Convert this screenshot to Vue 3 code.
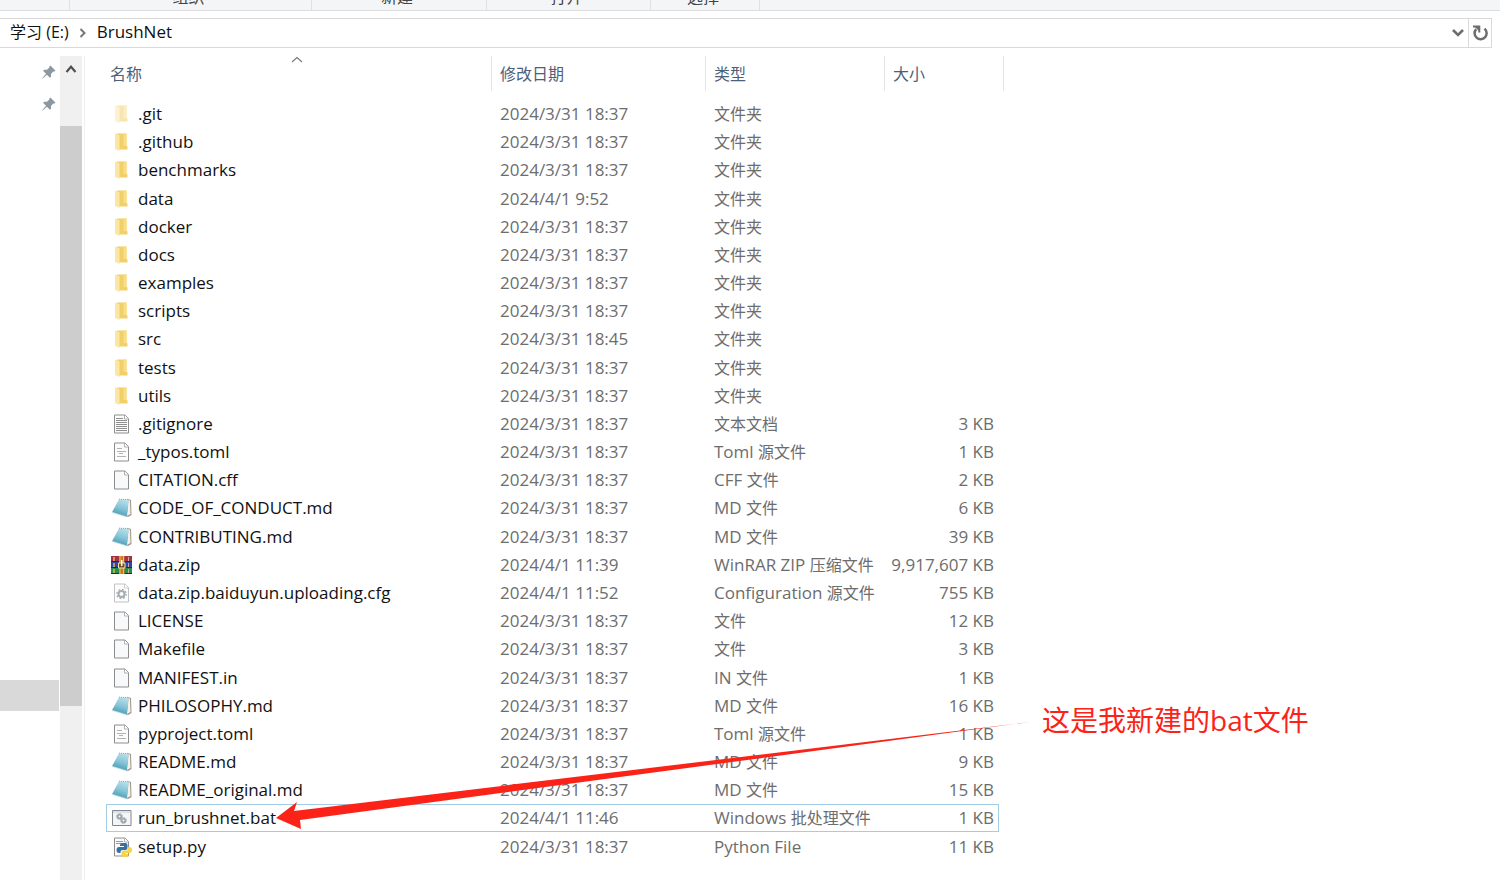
<script setup>
const day = '2024/3/31 18:37'
const files = [
  ['hidden', '.git', day, '文件夹', ''],
  ['folder', '.github', day, '文件夹', ''],
  ['folder', 'benchmarks', day, '文件夹', ''],
  ['folder', 'data', '2024/4/1 9:52', '文件夹', ''],
  ['folder', 'docker', day, '文件夹', ''],
  ['folder', 'docs', day, '文件夹', ''],
  ['folder', 'examples', day, '文件夹', ''],
  ['folder', 'scripts', day, '文件夹', ''],
  ['folder', 'src', '2024/3/31 18:45', '文件夹', ''],
  ['folder', 'tests', day, '文件夹', ''],
  ['folder', 'utils', day, '文件夹', ''],
  ['text', '.gitignore', day, '文本文档', '3 KB'],
  ['toml', '_typos.toml', day, 'Toml 源文件', '1 KB'],
  ['blank', 'CITATION.cff', day, 'CFF 文件', '2 KB'],
  ['md', 'CODE_OF_CONDUCT.md', day, 'MD 文件', '6 KB'],
  ['md', 'CONTRIBUTING.md', day, 'MD 文件', '39 KB'],
  ['rar', 'data.zip', '2024/4/1 11:39', 'WinRAR ZIP 压缩文件', '9,917,607 KB'],
  ['cfg', 'data.zip.baiduyun.uploading.cfg', '2024/4/1 11:52', 'Configuration 源文件', '755 KB'],
  ['blank', 'LICENSE', day, '文件', '12 KB'],
  ['blank', 'Makefile', day, '文件', '3 KB'],
  ['blank', 'MANIFEST.in', day, 'IN 文件', '1 KB'],
  ['md', 'PHILOSOPHY.md', day, 'MD 文件', '16 KB'],
  ['toml', 'pyproject.toml', day, 'Toml 源文件', '1 KB'],
  ['md', 'README.md', day, 'MD 文件', '9 KB'],
  ['md', 'README_original.md', day, 'MD 文件', '15 KB'],
  ['bat', 'run_brushnet.bat', '2024/4/1 11:46', 'Windows 批处理文件', '1 KB'],
  ['py', 'setup.py', day, 'Python File', '11 KB'],
].map(([icon, name, date, type, size]) => {
  const [, latin, han] = type.match(/^([\x00-\x7f]*)(.*)$/)
  return { icon, name, date, latin, han, size }
})
const isPage = (icon) => ['text', 'toml', 'blank', 'cfg', 'py'].includes(icon)
</script>

<template>
  <div class="explorer">
    <svg class="defs" width="0" height="0" aria-hidden="true">
      <linearGradient id="sheet" x1="0.7" y1="0" x2="0.4" y2="1">
        <stop offset="0" stop-color="#b9e0ea" />
        <stop offset="0.5" stop-color="#86c5d7" />
        <stop offset="1" stop-color="#4496b0" />
      </linearGradient>
    </svg>
    <div class="ribbon">
      <span class="group g1">组织</span>
      <span class="group g2">新建</span>
      <span class="group g3">打开</span>
      <span class="group g4">选择</span>
    </div>

    <nav class="address" aria-label="地址">
      <button class="crumb han">学习 (E:)</button>
      <svg class="sep" width="8" height="10" viewBox="0 0 8 10"><path d="M1.5 1l4 4-4 4" fill="none" stroke="#777" stroke-width="2" /></svg>
      <button class="crumb">BrushNet</button>
      <button class="drop" aria-label="历史记录">
        <svg width="14" height="10" viewBox="0 0 14 10"><path d="M2 2l5 5 5-5" fill="none" stroke="#6d6d6d" stroke-width="2.6" /></svg>
      </button>
      <button class="refresh" aria-label="刷新">
        <svg width="16" height="16" viewBox="0 0 16 16"><path d="M12.500 3.600a6 6 0 1 1-8.300.500" fill="none" stroke="#6d6d6d" stroke-width="2.5" /><path d="M1 1.500h6.300v6" fill="none" stroke="#6d6d6d" stroke-width="2" /><path d="M3 2h4v4z" fill="#6d6d6d" /></svg>
      </button>
    </nav>

    <div class="body">
      <aside class="tree">
        <svg v-for="n in 2" :key="n" class="pin" width="14" height="14" viewBox="0 0 14 14"><path d="M8.3.6l5.1 5-1.3 1.2-.9-.2-2.2 2.3.1 2.7-1.2 1.1-3-3L.8 13.4l-.4-.4 3.6-4.3-2.9-2.9 1.2-1.1 2.7.1 2.4-2.3-.3-.8z" fill="#8c979f" /></svg>
        <div class="current"></div>
      </aside>
      <div class="scroll">
        <button class="up" aria-label="向上滚动">
          <svg width="12" height="10" viewBox="0 0 12 10"><path d="M1.5 8L6 2.8 10.500 8" fill="none" stroke="#505050" stroke-width="2.2" /></svg>
        </button>
        <div class="thumb"></div>
      </div>

      <main class="pane">
        <table>
          <colgroup><col class="c1" /><col class="c2" /><col class="c3" /><col class="c4" /></colgroup>
          <thead>
            <tr>
              <th>
                <button class="head first">名称</button>
                <svg class="sort" width="12" height="7" viewBox="0 0 12 7"><path d="M1 6l5-4.500L11 6" fill="none" stroke="#777" stroke-width="1.1" /></svg>
              </th>
              <th><button class="head">修改日期</button></th>
              <th><button class="head">类型</button></th>
              <th><button class="head last">大小</button></th>
            </tr>
          </thead>
          <tbody>
            <tr v-for="f in files" :key="f.name" :class="{ selected: f.icon === 'bat' }">
              <td>
                <div class="name">
                  <svg class="icon" width="22" height="20" viewBox="0 0 22 20">
                    <g v-if="f.icon === 'folder' || f.icon === 'hidden'" :opacity="f.icon === 'hidden' ? 0.5 : 1">
                      <path d="M6 1.500h9.500v12.500l1 .5v3H6z" fill="#f3cf68" />
                      <path d="M12.500 1.500h3v12.500h-3z" fill="#f8dc86" />
                      <path d="M4 1.500l4.500 1.800V19L4 17z" fill="#fbe7a5" />
                    </g>
                    <g v-if="isPage(f.icon)">
                      <path d="M3.500 1h10.500l3.500 3.500V19h-14z" :fill="f.icon === 'blank' ? '#f8f9fa' : '#fcfcfc'" :stroke="f.icon === 'cfg' ? '#c2c2c2' : '#8d8d8d'" />
                      <path d="M13.500 1v4h4" fill="#fff" :stroke="f.icon === 'cfg' ? '#c2c2c2' : '#a0a0a0'" stroke-width=".8" />
                    </g>
                    <path v-if="f.icon === 'text'" d="M5 4.500h7M5 6.500h11M5 8.500h11M5 10.500h11M5 12.500h11M5 14.500h11M5 16.500h11" stroke="#8e8e8e" />
                    <path v-if="f.icon === 'toml'" d="M6 6.500h5M6 9.500h9M8 11.500h4M6 14.500h9" stroke="#b2b2b2" />
                    <g v-if="f.icon === 'cfg'" fill="none" stroke="#a4adb2">
                      <circle cx="10.500" cy="11" r="3" stroke-width="2" />
                      <circle cx="10.500" cy="11" r="4.600" stroke-width="1.300" stroke-dasharray="1.800 1.800" />
                    </g>
                    <g v-if="f.icon === 'md'">
                      <path d="M17 1l3 1 .5 15-3.500 2-2.500-1z" fill="#9c9488" />
                      <path d="M17.500 2l1.500.500.500 13.500-3.500 2z" fill="#f3f1ec" />
                      <path d="M8 1.200l9.800.300L15.500 18.800 1 14.300z" fill="url(#sheet)" />
                      <path d="M1 14.300l14.500 4.500" stroke="#bfe0e8" stroke-width=".8" />
                      <path d="M8 1.200l9.800.300" stroke="#8ca3a9" stroke-dasharray="1 1" />
                    </g>
                    <g v-if="f.icon === 'rar'">
                      <path d="M0 1h21v6H0z" fill="#a63148" />
                      <path d="M0 7h21v6H0z" fill="#3446a5" />
                      <path d="M0 13h21v6H0z" fill="#25904a" />
                      <path d="M0 6.500h21M0 12.500h21M0 18.500h21" stroke="#252842" />
                      <path d="M3 2v4M3 8v4M3 14v4" stroke="#e0b84e" stroke-width="1.500" />
                      <path d="M17.500 2v4M17.500 8v4M17.500 14v4" stroke="#c9a9a0" />
                      <path d="M8 1h5.500v18H8z" fill="#c47d24" />
                      <path d="M9 1v18M12.500 1v18" stroke="#f1bd52" />
                      <path d="M7.500 8h6.500v5H7.500z" fill="#775321" stroke="#f1e2b3" />
                      <path d="M10.700 5v6" stroke="#fff" stroke-width="1.500" />
                    </g>
                    <g v-if="f.icon === 'bat'">
                      <path d="M1.500 2.500h18.500v15H1.500z" fill="#f5f5f5" stroke="#808890" />
                      <path d="M2 4h17.500" stroke="#c8ccd0" />
                      <g fill="none" stroke="#9aa4ad">
                        <circle cx="8.500" cy="8.500" r="1.800" stroke-width="1.600" />
                        <circle cx="8.500" cy="8.500" r="3" stroke-dasharray="1.300 1" />
                        <circle cx="12.500" cy="12.500" r="1.800" stroke-width="1.600" />
                        <circle cx="12.500" cy="12.500" r="3" stroke-dasharray="1.300 1" />
                      </g>
                    </g>
                    <g v-if="f.icon === 'py'">
                      <path d="M5 4.500h7M5 6.500h9" stroke="#999" />
                      <path d="M11 6h3.500q2 0 2 2v3q0 2-2 2h-3q-2 0-2 2v1H8q-2.500 0-2.500-3t2.500-3h5V9H9V8q0-2 2-2z" fill="#3571a5" />
                      <path d="M16.500 10h2q2.500 0 2.500 3t-2.500 3h-4v1h3v1q0 2-2.500 2h-2q-2.500 0-2.500-2v-2.500q0-2 2-2h3q1.500 0 1.500-2z" fill="#f6d34b" />
                    </g>
                  </svg>
                  <span>{{ f.name }}</span>
                </div>
              </td>
              <td>{{ f.date }}</td>
              <td>{{ f.latin }}<span class="han">{{ f.han }}</span></td>
              <td class="size">{{ f.size }}</td>
            </tr>
          </tbody>
        </table>
      </main>
    </div>

    <svg class="arrow" width="760" height="116" viewBox="0 0 760 116"><path d="M0 100L21 84 18 93 754 4 24 102 25 111z" fill="#fb2318" /></svg>
    <p class="note">这是我新建的bat文件</p>
  </div>
</template>

<style>
html, body, #app { height: 100%; }
body { margin: 0; }
</style>

<style scoped>
.explorer {
  position: relative;
  display: flex;
  flex-direction: column;
  min-height: 100%;
  overflow: hidden;
  background: #fff;
  color: #111;
  font: 17px/24px "Open Sans", "Noto Sans CJK SC", sans-serif;
}
.defs { position: absolute; }
button {
  padding: 0;
  border: 0;
  background: none;
  color: inherit;
  font: inherit;
}
.crumb { line-height: 22px; padding-bottom: 2px; }
.han, .crumb.han { font-size: 16px; }
.ribbon {
  display: flex;
  align-items: flex-end;
  height: 10px;
  overflow: hidden;
  background: #f4f5f7;
  border-bottom: 1px solid #dcdddf;
  color: #444;
  font-size: 16px;
}
.group {
  box-sizing: border-box;
  flex: none;
  height: 24px;
  padding: 3px 4px 0 0;
  border-right: 1px solid #e0e1e3;
  text-align: center;
  line-height: 16px;
}
.g1 { width: 243px; margin-left: 69px; border-left: 1px solid #e0e1e3; }
.g2 { width: 175px; }
.g3 { width: 164px; }
.g4 { width: 109px; }
.address {
  display: flex;
  align-items: center;
  height: 28px;
  margin: 7px 8px 0 0;
  padding-left: 10px;
  border: 1px solid #d9d9d9;
  border-left: 0;
}
.sep { margin: 0 10px; }
.drop { display: flex; margin-left: auto; padding: 4px 3px; }
.refresh {
  display: flex;
  align-items: center;
  justify-content: center;
  align-self: stretch;
  width: 23px;
  border-left: 1px solid #d9d9d9;
}
.body { display: flex; flex: 1; padding-top: 8px; }
.tree {
  display: flex;
  flex-direction: column;
  align-items: flex-end;
  width: 60px;
}
.pin { margin: 9px 4px 9px 0; }
.current {
  width: 59px;
  height: 31px;
  margin: 560px 1px 0 0;
  background: #d9d9d9;
}
.scroll { width: 22px; background: #f0f0f0; }
.up {
  display: flex;
  align-items: center;
  justify-content: center;
  width: 22px;
  height: 26px;
}
.thumb { height: 580px; margin-top: 44px; background: #cdcdcd; }
.pane {
  display: flex;
  flex: 1;
  margin-left: 2px;
  padding: 0 0 19px 21px;
  border-left: 1px solid #f0f0f0;
}
table {
  width: 893px;
  table-layout: fixed;
  border-collapse: separate;
  border-spacing: 0;
  color: #6d6d6d;
}
.c1 { width: 386px; }
.c2 { width: 214px; }
.c3 { width: 179px; }
.c4 { width: 114px; }
th {
  position: relative;
  height: 44px;
  padding: 0;
  vertical-align: top;
  font-weight: 400;
  color: #4c607a;
}
.head {
  display: block;
  box-sizing: border-box;
  width: 100%;
  height: 35px;
  padding-left: 8px;
  border-right: 1px solid #e5e5e5;
  text-align: left;
  font-size: 16px;
}
.first { padding-left: 4px; }
.last { width: 119px; }
.sort { position: absolute; top: 0; left: 185px; }
td { padding: 0 0 0 8px; white-space: nowrap; }
td:first-child { padding-left: 5px; color: #111; }
td.size { padding: 0 5px 0 0; text-align: right; }
.name { display: flex; align-items: center; gap: 5px; }
.icon { flex: none; }
.selected { outline: 1px solid #a3cde6; outline-offset: -1px; }
.arrow { position: absolute; left: 276px; top: 718px; pointer-events: none; }
.note {
  position: absolute;
  left: 1042px;
  top: 700px;
  margin: 0;
  color: #fb2318;
  font-size: 28px;
  line-height: 40px;
}
</style>
